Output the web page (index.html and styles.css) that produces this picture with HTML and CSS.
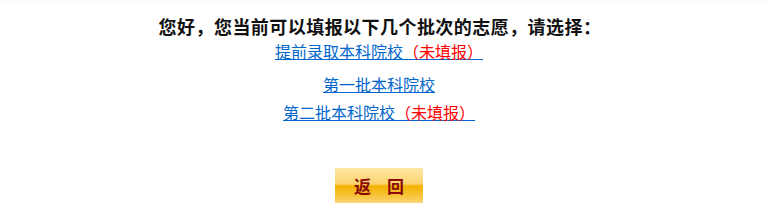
FILE: index.html
```html
<!DOCTYPE html>
<html lang="zh-CN">

<head>
    <meta charset="UTF-8">
    <title>选择批次</title>
    <link rel="stylesheet" href="styles.css">
</head>

<body>
    <div class="topbar"></div>
    <div class="container">
        <h1 class="title">您好，您当前可以填报以下几个批次的志愿，请选择：</h1>
        <ul class="batch-list">
            <li class="batch first"><a href="#">提前录取本科院校<span class="status">（未填报）</span> </a></li>
            <li class="batch second"><a href="#">第一批本科院校</a></li>
            <li class="batch third"><a href="#">第二批本科院校<span class="status">（未填报）</span></a></li>
        </ul>
        <div class="actions">
            <button class="btn-back" type="button">返&nbsp;回</button>
        </div>
    </div>
</body>

</html>
```

FILE: styles.css
```css
body {
    margin: 0;
    padding: 0;
    background-color: #ffffff;
    font-family: "Noto Sans CJK SC", "DejaVu Sans", sans-serif;
}

.topbar {
    height: 4px;
    background-color: #fbfbfb;
}

.container {
    width: 758px;
    text-align: center;
}

.title {
    margin: 10px 0 0 0;
    font-size: 18px;
    line-height: 24px;
    font-weight: bold;
    color: #111111;
    letter-spacing: 0.45px;
    padding-left: 2px;
}

.batch-list {
    list-style: none;
    margin: 0;
    padding: 0;
}

.batch {
    font-size: 16px;
    line-height: 20px;
}

.batch a {
    color: #0066cc;
    text-decoration: underline;
}

.batch .status {
    color: #ff0000;
}

.first {
    margin-top: 3px;
}

.second {
    margin-top: 13px;
}

.third {
    margin-top: 8px;
}

.actions {
    margin-top: 46px;
}

.btn-back {
    width: 88px;
    height: 35px;
    border: none;
    padding: 0 0 0 6px;
    font-family: "Noto Sans CJK SC", serif;
    font-size: 17px;
    font-weight: bold;
    color: #8b0a0a;
    letter-spacing: 6px;
    background: linear-gradient(to bottom, #fde7a4 0%, #fbd470 45%, #f4b200 52%, #f7c43c 80%, #fcd77a 100%);
    cursor: pointer;
}
```
